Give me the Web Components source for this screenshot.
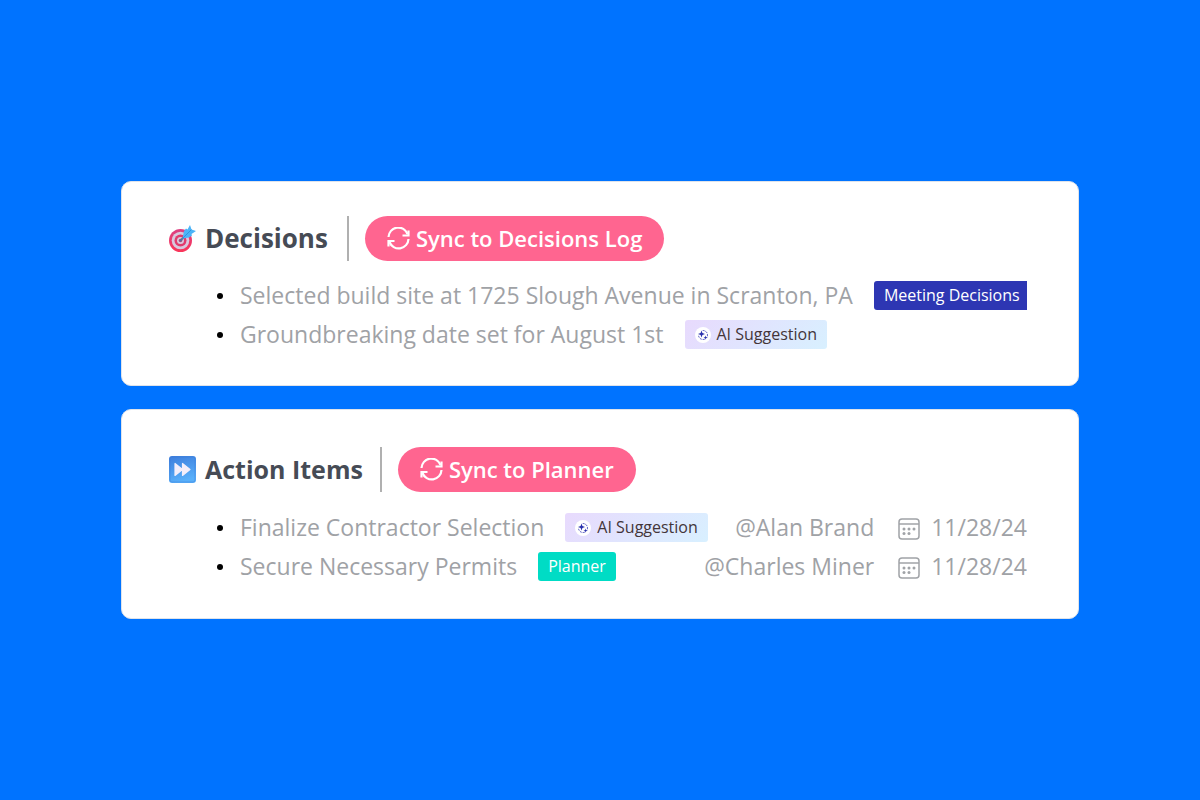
<!DOCTYPE html>
<html lang="en">
<head>
<meta charset="utf-8">
<meta name="viewport" content="width=device-width, initial-scale=1">
<title>Meeting minutes</title>
<style>
  body {
    margin: 0;
    min-height: 100vh;
    display: grid;
    align-items: center;
    background: #0073ff;
    font-family: "Open Sans", "Noto Sans", sans-serif;
    color: #9fa2a6;
  }
</style>
</head>
<body>
<minutes-board>
  <minutes-card>
    <target-icon slot="icon"></target-icon>
    <span slot="title">Decisions</span>
    <sync-button slot="action">Sync to Decisions Log</sync-button>
    <minutes-item>Selected build site at 1725 Slough Avenue in Scranton, PA
      <label-tag slot="tag" kind="decision">Meeting Decisions</label-tag>
    </minutes-item>
    <minutes-item>Groundbreaking date set for August 1st
      <label-tag slot="tag" kind="ai">AI Suggestion</label-tag>
    </minutes-item>
  </minutes-card>
  <minutes-card class="roomy">
    <forward-icon slot="icon"></forward-icon>
    <span slot="title">Action Items</span>
    <sync-button slot="action">Sync to Planner</sync-button>
    <minutes-item>Finalize Contractor Selection
      <label-tag slot="tag" kind="ai">AI Suggestion</label-tag>
      <task-meta slot="meta" date="11/28/24">@Alan Brand</task-meta>
    </minutes-item>
    <minutes-item>Secure Necessary Permits
      <label-tag slot="tag" kind="planner">Planner</label-tag>
      <task-meta slot="meta" date="11/28/24">@Charles Miner</task-meta>
    </minutes-item>
  </minutes-card>
</minutes-board>

<script>
  const define = (name, html, setup) => {
    const template = document.createElement('template');
    template.innerHTML = html;
    customElements.define(name, class extends HTMLElement {
      constructor() {
        super();
        this.attachShadow({ mode: 'open' }).append(template.content.cloneNode(true));
      }
      connectedCallback() {
        if (setup) setup(this, this.shadowRoot);
      }
    });
  };

  define('minutes-board', `
    <style>
      :host { display: block; padding: 24px 10%; }
      main { display: grid; grid-template-columns: minmax(0, 1fr); gap: 23px; max-width: 958px; margin: 0 auto; }
    </style>
    <main><slot></slot></main>`);

  define('minutes-card', `
    <style>
      :host {
        display: block;
        box-sizing: border-box;
        padding: 34px 51px 31px 47px;
        background: #fff;
        border: 1px solid #dfe3ea;
        border-radius: 10px;
      }
      header { display: flex; align-items: center; height: 45px; margin-bottom: 15px; }
      h2 {
        margin: 0;
        padding: 0 19px 0 9px;
        font-size: 26px;
        line-height: 45px;
        font-weight: 700;
        color: #464b55;
        white-space: nowrap;
      }
      .action { border-left: 2px solid #b0b0b0; padding-left: 16px; }
      :host(.roomy) { padding-top: 37px; padding-bottom: 32px; }
      :host(.roomy) header { margin-bottom: 16px; }
      :host(.roomy) h2 { font-size: 25px; padding-right: 17px; }
    </style>
    <section>
      <header>
        <slot name="icon"></slot>
        <h2><slot name="title"></slot></h2>
        <div class="action"><slot name="action"></slot></div>
      </header>
      <div role="list"><slot></slot></div>
    </section>`);

  define('minutes-item', `
    <style>
      :host { display: block; padding-left: 48px; }
      .row { display: flex; align-items: center; height: 39px; overflow: hidden; font-size: 23px; font-weight: 400; line-height: 39px; white-space: nowrap; }
      .dot { flex: none; width: 6px; height: 6px; margin-right: 17px; border-radius: 50%; background: #000; }
      .text { flex: none; }
      .tag { flex: none; margin-left: 21px; line-height: 0; }
      .meta { margin-left: auto; }
    </style>
    <div class="row" role="listitem">
      <span class="dot"></span>
      <span class="text"><slot></slot></span>
      <span class="tag"><slot name="tag"></slot></span>
      <span class="meta"><slot name="meta"></slot></span>
    </div>`);

  define('sync-button', `
    <style>
      :host { display: block; }
      button {
        display: flex;
        align-items: center;
        gap: 6px;
        height: 45px;
        padding: 0 22px;
        border: 0;
        border-radius: 23px;
        background: #ff6590;
        color: #fff;
        font: 600 22px/45px "Open Sans", "Noto Sans", sans-serif;
        white-space: nowrap;
        cursor: pointer;
      }
      svg { display: block; width: 23px; height: 24px; }
    </style>
    <button type="button">
      <svg viewBox="0 0 23 24" fill="none" stroke="#fff" stroke-width="2.200" aria-hidden="true">
        <path d="M1.500 10A9.800 9.800 0 0 1 20.500 7M21.500 12A9.800 9.800 0 0 1 2.500 15"/>
        <path d="M21.500 3.500v5h-6M1.500 19.500v-5.500h6"/>
      </svg>
      <span><slot></slot></span>
    </button>`);

  define('label-tag', `
    <style>
      :host { display: block; }
      .tag {
        display: flex;
        align-items: center;
        height: 29px;
        padding: 0 10px;
        border-radius: 3px;
        font-size: 16px;
        font-weight: 400;
        line-height: 29px;
        color: #fff;
      }
      svg { display: none; width: 16px; height: 16px; margin-right: 6px; }
      :host([kind="decision"]) .tag { background: #2d36b3; }
      :host([kind="planner"]) .tag { background: #00dcc5; }
      :host([kind="ai"]) .tag { background: linear-gradient(135deg, #e8dafd, #d8f0ff); color: #433539; }
      :host([kind="ai"]) svg { display: block; }
    </style>
    <span class="tag">
      <svg viewBox="0 0 16 16" aria-hidden="true">
        <circle cx="8" cy="8" r="8" fill="#fff"/>
        <circle cx="8" cy="8" r="4.500" fill="none" stroke="#343bb5" stroke-width=".8" stroke-dasharray="2 1" transform="rotate(-50 8 8)"/>
        <path d="M2.500 2.500h5v6h-5z" fill="#fff"/>
        <path d="M6.500 3.500l.9 2.600L10 7l-2.600.9-.9 2.600-.9-2.600L3 7l2.600-.9zM10.500 8.500l.5 1.500 1.500.5-1.500.5-.5 1.500-.5-1.500-1.500-.5 1.500-.5z" fill="#2931ad"/>
      </svg>
      <span><slot></slot></span>
    </span>`);

  define('task-meta', `
    <style>
      :host { display: block; }
      .meta { display: flex; align-items: center; }
      svg { display: block; width: 22px; height: 22px; margin: 2px 11px 0 24px; }
    </style>
    <span class="meta">
      <span><slot></slot></span>
      <svg viewBox="0 0 22 22" aria-hidden="true">
        <rect x="1" y="1" width="20" height="20" rx="3" fill="none" stroke="#a0a3a7" stroke-width="1.500"/>
        <path d="M1 6h20" stroke="#a0a3a7" stroke-width="1.500"/>
        <g fill="#a0a3a7"><circle cx="6" cy="11" r="1.500"/><circle cx="11" cy="11" r="1.500"/><circle cx="16" cy="11" r="1.500"/><circle cx="6" cy="15.500" r="1.500"/><circle cx="11" cy="15.500" r="1.500"/></g>
      </svg>
      <time></time>
    </span>`,
    (host, root) => { root.querySelector('time').textContent = host.getAttribute('date'); });

  define('target-icon', `
    <style>
      :host { display: block; }
      svg { display: block; width: 27px; height: 27px; }
    </style>
    <svg viewBox="0 0 27 27" aria-hidden="true">
      <defs>
        <linearGradient id="ring" x1="0" y1="0" x2="0" y2="1"><stop offset="0" stop-color="#dc3f82"/><stop offset="1" stop-color="#fa3659"/></linearGradient>
      </defs>
      <circle cx="11.500" cy="15.500" r="11.500" fill="url(#ring)"/>
      <circle cx="11.500" cy="15.500" r="8.800" fill="#d8c9de"/>
      <circle cx="11.500" cy="15.500" r="6" fill="#e23b6d"/>
      <circle cx="11.500" cy="15.500" r="3.500" fill="#d8c9de"/>
      <circle cx="11.500" cy="15.500" r="1.800" fill="#b64b78"/>
      <path d="M11.500 15.500L16 11" stroke="#56729c" stroke-width="2" stroke-linecap="round"/>
      <path d="M13.500 13.500L15 6l2-2.500 1.500 1L21 0l1.500 4.500L27 6l-4.500 3 .5 1.500-3 2z" fill="#4bb4f8"/>
      <path d="M14 13l8.500-8.500" stroke="#2b8cd6" stroke-width=".8" fill="none"/>
    </svg>`);

  define('forward-icon', `
    <style>
      :host { display: block; }
      svg { display: block; width: 27px; height: 27px; }
    </style>
    <svg viewBox="0 0 27 27" aria-hidden="true">
      <defs>
        <linearGradient id="tile" x1="0" y1="0" x2=".3" y2="1"><stop offset="0" stop-color="#3d7ddc"/><stop offset="1" stop-color="#59b0fa"/></linearGradient>
      </defs>
      <rect width="27" height="27" rx="3" fill="url(#tile)"/>
      <rect x="1" y="1" width="25" height="25" rx="2" fill="none" stroke="#3a7bd6" stroke-opacity=".45"/>
      <path d="M6 7.500v12l7.500-6zM13.500 7.500v12l7.500-6z" fill="#f4eefa" stroke="#f4eefa" stroke-width="1.200" stroke-linejoin="round"/>
    </svg>`);
</script>
</body>
</html>
